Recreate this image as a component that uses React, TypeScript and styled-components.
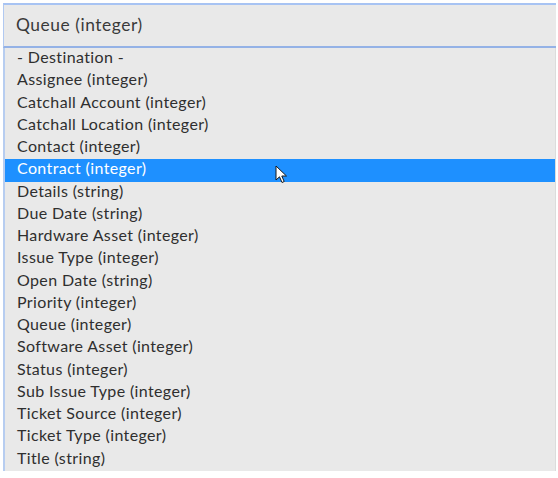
import React from "react";
import styled, { createGlobalStyle } from "styled-components";

const GlobalStyle = createGlobalStyle`
  html, body {
    margin: 0;
    padding: 0;
    background: #ffffff;
  }
  body {
    font-family: Lato, "Open Sans", "Liberation Sans", sans-serif;
  }
`;

const Page = styled.div`
  padding: 3px 2px 0 3px;
  width: 553px;
`;

const SelectBox = styled.div`
  height: 41px;
  box-sizing: content-box;
  background: #e9e9e9;
  border-top: 2px solid #a7c3f3;
  border-left: 1px solid #b1c9f1;
  border-bottom: 2px solid #94b2e6;
  display: flex;
  align-items: center;
  padding-left: 12px;
  padding-bottom: 0;
  font-size: 17.4px;
  line-height: 1;
  letter-spacing: 0.55px;
  color: #3a3a3a;
`;

const HeaderText = styled.span`
  margin-top: -2px;
`;

const List = styled.ul`
  position: relative;
  margin: 0;
  padding: 0;
  list-style: none;
  background: #e9e9e9;
  border-left: 2px solid #b7cdf0;
  border-right: 1px solid #dcdcdc;
`;

const Item = styled.li<{ $active?: boolean }>`
  height: 22.25px;
  line-height: 18px;
  padding-left: 12px;
  font-size: 16px;
  letter-spacing: 0.37px;
  color: ${(p) => (p.$active ? "#ffffff" : "#2f2f2f")};
  background: ${(p) => (p.$active ? "#1e90ff" : "transparent")};
  white-space: nowrap;
`;

const Cursor = styled.svg`
  position: absolute;
  left: 270px;
  top: 117px;
`;

const options = [
  "- Destination -",
  "Assignee (integer)",
  "Catchall Account (integer)",
  "Catchall Location (integer)",
  "Contact (integer)",
  "Contract (integer)",
  "Details (string)",
  "Due Date (string)",
  "Hardware Asset (integer)",
  "Issue Type (integer)",
  "Open Date (string)",
  "Priority (integer)",
  "Queue (integer)",
  "Software Asset (integer)",
  "Status (integer)",
  "Sub Issue Type (integer)",
  "Ticket Source (integer)",
  "Ticket Type (integer)",
  "Title (string)",
];

export default function App() {
  return (
    <>
      <GlobalStyle />
      <Page>
        <SelectBox>
          <HeaderText>Queue (integer)</HeaderText>
        </SelectBox>
        <List>
          {options.map((o) => (
            <Item key={o} $active={o === "Contract (integer)"}>
              {o}
            </Item>
          ))}
          <Cursor width="14" height="20" viewBox="0 0 14 20">
            <path
              d="M1 1 L1 15 L4.5 11.8 L7 17.5 L9.2 16.5 L6.8 11 L11.5 11 Z"
              fill="#ffffff"
              stroke="#1a1a1a"
              strokeWidth="1"
              strokeLinejoin="round"
            />
          </Cursor>
        </List>
      </Page>
    </>
  );
}
